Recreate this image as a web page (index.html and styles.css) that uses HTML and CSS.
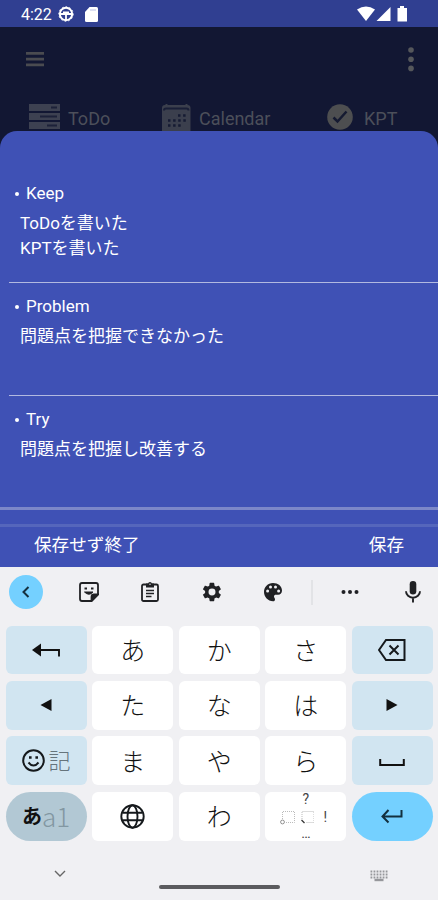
FILE: index.html
```html
<!DOCTYPE html>
<html lang="ja">
<head>
  <meta charset="UTF-8">
  <title>KPT</title>
  <link rel="stylesheet" href="styles.css">
</head>
<body>

  <div class="status">
    <span class="time">4:22</span>
    <svg class="status-wheel" width="16" height="16" viewBox="0 0 16 16" fill="none" stroke="#fff"><circle cx="8" cy="8" r="6.2" stroke-width="2"/><circle cx="8" cy="8" r="7.2" stroke-dasharray="1.6 2.1"/><path d="M2 8h12M8 8v6M5 6.5h6" stroke-width="1.8"/></svg>
    <svg class="status-card" width="13" height="15" viewBox="0 0 13 15"><path d="M4.500 0H11.500a1.500 1.500 0 0 1 1.500 1.500v12a1.500 1.500 0 0 1-1.500 1.500H1.500A1.500 1.500 0 0 1 0 13.500V5z" fill="#fff"/><path d="M5 3h6" stroke="#b9bfe4"/></svg>
    <svg class="status-right" width="52" height="16" viewBox="0 0 52 16" fill="#fff"><path d="M0 3.500Q9 -2.500 18 3.500L9 15z"/><path d="M33.500 1v14H19.500z"/><path d="M43 0h4v2h3v13.500h-9.500V2H43z"/></svg>
  </div>

  <div class="header">
    <div class="toolbar">
      <svg width="18" height="15" viewBox="0 0 18 15" fill="#4a4b50"><path d="M0 0h18v2.700H0zM0 5.800h18v2.700H0zM0 11.600h18v2.700H0z"/></svg>
      <svg width="6" height="25" viewBox="0 0 6 25" fill="#55575b"><circle cx="3" cy="3" r="2.800"/><circle cx="3" cy="12.200" r="2.800"/><circle cx="3" cy="21.400" r="2.800"/></svg>
    </div>
    <div class="tabs">
      <div class="tab tab-todo">
        <svg width="32" height="26" viewBox="0 0 32 26"><path d="M1 1h31v7H1zM1 10h31v7H1zM1 19h31v7H1z" fill="#3d4151"/><path d="M23 4.500h6M12 13.500h17M19 22.500h10" stroke="#1c2139" stroke-width="2"/></svg>
        <span>ToDo</span>
      </div>
      <div class="tab tab-calendar">
        <svg width="29" height="28" viewBox="0 0 29 28"><rect y="2" width="28.500" height="30" rx="3" fill="#3b3f4d"/><path d="M2 7.500q0-2 2-2h20.500q2 0 2 2" fill="none" stroke="#191e37" stroke-width="2"/><path d="M4.500 1v3M24.500 1v3" stroke="#3b3f4d" stroke-width="2"/><path d="M16 12.500h8M6 17.500h18M6 22.500h13" stroke="#161b33" stroke-width="2.500" stroke-dasharray="2.500 2.600"/></svg>
        <span>Calendar</span>
      </div>
      <div class="tab tab-kpt">
        <svg width="26" height="27" viewBox="0 0 26 27"><circle cx="13" cy="14" r="12.800" fill="#4d4e50"/><path d="M6.500 14.500l4 4 9-10" fill="none" stroke="#151a31" stroke-width="2.500"/></svg>
        <span>KPT</span>
      </div>
    </div>
  </div>

  <div class="sheet">
    <div class="item">
      <h2>Keep</h2>
      <p>ToDoを書いた<br>KPTを書いた</p>
    </div>
    <div class="item">
      <h2>Problem</h2>
      <p>問題点を把握できなかった</p>
    </div>
    <div class="item">
      <h2>Try</h2>
      <p>問題点を把握し改善する</p>
    </div>
    <div class="actions">
      <span>保存せず終了</span>
      <span>保存</span>
    </div>
  </div>

  <div class="keyboard">
    <div class="tools">
      <div class="tool back"><svg width="34" height="34" viewBox="0 0 34 34"><path d="M19.500 12L14.500 17l5 5" fill="none" stroke="#15303f" stroke-width="2"/></svg></div>
      <div class="tool"><svg width="20" height="20" viewBox="0 0 20 20" fill="none" stroke="#202124" stroke-width="1.800"><path d="M3 1h14q2 0 2 2v9.500L12.500 19H3q-2 0-2-2V3q0-2 2-2z"/><path d="M19 12.500h-4q-2.500 0-2.500 2.500v4z" fill="#202124"/><path d="M5.500 10q4.500 4.500 8.500 0z" fill="#202124" stroke-width="1"/><path d="M5.500 6.500h2.500M12 6.500h2.500"/></svg></div>
      <div class="tool"><svg width="18" height="20" viewBox="0 0 18 20" fill="none" stroke="#202124" stroke-width="1.800"><rect x="1" y="2.500" width="16" height="16.500" rx="1.500"/><path d="M5 1.500h8v4H5z" fill="#202124" stroke="none"/><circle cx="9" cy="1.800" r="1.800" fill="#202124" stroke="none"/><path d="M5 8.500h8M5 11.500h8M5 14.500h5.500" stroke-width="1.500"/><circle cx="9" cy="2.200" r=".7" fill="#f0f0f3" stroke="none"/></svg></div>
      <div class="tool"><svg width="22" height="22" viewBox="0 0 24 24"><path fill="#202124" fill-rule="evenodd" d="M19.400 13a7.800 7.800 0 0 0 0-2l2.100-1.600a.5.5 0 0 0 .1-.7l-2-3.400a.5.5 0 0 0-.6-.2l-2.500 1a7.300 7.300 0 0 0-1.700-1L14.400 2.400a.5.5 0 0 0-.5-.4h-4a.5.5 0 0 0-.5.400L9 5.100a7.700 7.700 0 0 0-1.700 1l-2.500-1a.5.5 0 0 0-.6.200l-2 3.400a.5.5 0 0 0 .1.700L4.500 11a7.800 7.800 0 0 0 0 2l-2.200 1.600a.5.5 0 0 0-.1.700l2 3.400c.1.200.400.300.6.200l2.500-1c.5.400 1.100.700 1.700 1l.4 2.700c0 .200.200.400.5.400h4c.300 0 .5-.2.500-.4l.4-2.700c.6-.3 1.200-.6 1.700-1l2.500 1c.2.100.5 0 .6-.2l2-3.400a.5.5 0 0 0-.1-.7zM12 8.200a3.800 3.800 0 1 1 0 7.600 3.800 3.800 0 0 1 0-7.600z"/></svg></div>
      <div class="tool"><svg width="20" height="20" viewBox="0 0 20 20"><path fill="#202124" d="M10 1C4.800 1 1 5 1 10s4 9.200 9 9.200c1.500 0 2-1 2-1.800 0-1.500-1-1.700-1-3 0-1 .8-1.600 1.800-1.600H15c2.500 0 4-2 4-4.300C19 4 15 1 10 1z"/><g fill="#f0f0f3"><circle cx="4.600" cy="9" r="1.500"/><circle cx="7.500" cy="5" r="1.500"/><circle cx="12.500" cy="5" r="1.500"/><circle cx="15.600" cy="9" r="1.500"/></g></svg></div>
      <div class="split"></div>
      <div class="tool"><svg width="18" height="6" viewBox="0 0 18 6" fill="#202124"><circle cx="2.500" cy="3" r="2"/><circle cx="9" cy="3" r="2"/><circle cx="15.500" cy="3" r="2"/></svg></div>
      <div class="tool mic"><svg width="16" height="22" viewBox="0 0 16 22"><rect x="4.700" y="0" width="6.600" height="13.500" rx="3.300" fill="#202124"/><path d="M1 10.200a7 6.500 0 0 0 14 0M8 17v4.500" fill="none" stroke="#202124" stroke-width="1.900"/></svg></div>
    </div>

    <div class="keys">
      <div class="key side"><svg width="30" height="16" viewBox="0 0 30 16"><path d="M1 8l9-6.500v13z" fill="#111"/><path d="M9 8h19v6.500" fill="none" stroke="#111" stroke-width="1.900"/></svg></div>
      <div class="key kana">あ</div>
      <div class="key kana">か</div>
      <div class="key kana">さ</div>
      <div class="key side"><svg width="28" height="22" viewBox="0 0 28 22" fill="none" stroke="#15191c" stroke-width="2"><path d="M8 1h18.500v20H8L1 11zM11.500 6.500l9 9M20.500 6.500l-9 9"/></svg></div>

      <div class="key side"><svg width="12" height="14" viewBox="0 0 12 14"><path d="M.5 7L11.500 1v12z" fill="#111"/></svg></div>
      <div class="key kana">た</div>
      <div class="key kana">な</div>
      <div class="key kana">は</div>
      <div class="key side"><svg width="12" height="14" viewBox="0 0 12 14"><path d="M11.500 7L.5 1v12z" fill="#111"/></svg></div>

      <div class="key side emoji"><svg width="23" height="23" viewBox="0 0 23 23" fill="none" stroke="#15191c" stroke-width="2"><circle cx="11.500" cy="11.500" r="10.300"/><path d="M6.500 13.500q5 6 10 0"/><path d="M7 8.500h2.600M13.400 8.500H16" stroke-width="2.600"/></svg><span>記</span></div>
      <div class="key kana">ま</div>
      <div class="key kana">や</div>
      <div class="key kana">ら</div>
      <div class="key side"><svg class="space" width="26" height="8" viewBox="0 0 26 8"><path d="M1.200 0v6h23.600V0" fill="none" stroke="#111" stroke-width="2"/></svg></div>

      <div class="key side mode"><b>あ</b><span>a1</span></div>
      <div class="key"><svg width="25" height="25" viewBox="0 0 25 25" fill="none" stroke="#15191c" stroke-width="1.900"><circle cx="12.500" cy="12.500" r="11.200"/><ellipse cx="12.500" cy="12.500" rx="5" ry="11.200"/><path d="M2.200 8.700h20.600M2.200 16.300h20.600"/></svg></div>
      <div class="key kana">わ</div>
      <div class="key marks">
        <span>?</span>
        <div class="marks-row">
          <svg width="34" height="15" viewBox="0 0 34 15" fill="none" stroke="#bbb"><path d="M2.500 9V1.500h12v11H6M22 9V1.500h12v11h-8" stroke-dasharray="1 1"/><circle cx="2.500" cy="12" r="1.900" stroke="#777" stroke-width=".8"/><path d="M21.500 10l3 3" stroke="#333" stroke-width="1.300"/></svg>
          <span>!</span>
        </div>
        <span class="dots">…</span>
      </div>
      <div class="key enter"><svg width="22" height="15" viewBox="0 0 22 15" fill="none" stroke="#12303f" stroke-width="2"><path d="M7.500 1L1.500 7.500l6 6M1.500 7.500H20.500V1"/></svg></div>
    </div>

    <div class="nav">
      <svg width="12" height="8" viewBox="0 0 12 8"><path d="M1 1l5 5 5-5" fill="none" stroke="#666" stroke-width="1.400"/></svg>
      <div class="pill"></div>
      <svg width="18" height="12" viewBox="0 0 18 12" stroke="#96979b" fill="none"><path d="M.5 1.500h17M.5 4.500h17M.5 7.500h17" stroke-width="1.800" stroke-dasharray="1.800 1.240"/><path d="M4.500 10h9" stroke-width="2.400"/></svg>
    </div>
  </div>

</body>
</html>
```
FILE: styles.css
```css
body {
  margin: 0;
  width: 438px;
  height: 900px;
  overflow: hidden;
  font-family: Roboto, "Noto Sans CJK JP", sans-serif;
  background: #121733;
}
svg {
  display: block;
  flex: none;
}
.status {
  display: flex;
  align-items: center;
  height: 27px;
  padding: 1px 29px 0 21px;
  box-sizing: border-box;
  background: #303f91;
  color: #fff;
}
.time {
  width: 37px;
  font-size: 16px;
}
.status-card {
  margin-left: 11px;
}
.status-right {
  margin-left: auto;
}

.header {
  height: 119px;
  overflow: hidden;
  color: #4c4f5a;
}
.toolbar {
  display: flex;
  justify-content: space-between;
  align-items: center;
  height: 64px;
  padding: 0 24px 0 26px;
}
.tabs {
  display: flex;
  padding: 12px 0 0 28px;
}
.tab {
  display: flex;
  align-items: flex-start;
  height: 32px;
  font-size: 18px;
  line-height: 31px;
}
.tab-todo {
  width: 134px;
  gap: 8px;
}
.tab-calendar {
  width: 165px;
  gap: 8px;
}
.tab-kpt {
  gap: 11px;
}

.sheet {
  position: relative;
  height: 436px;
  margin-top: -15px;
  padding-top: 39px;
  box-sizing: border-box;
  border-radius: 17px 17px 0 0;
  background: #3f51b5;
  color: #fff;
}
.item {
  height: 113px;
  margin-left: 9px;
  padding: 11px 0 0 4px;
  box-sizing: border-box;
  border-bottom: 1px solid #b2b9e0;
}
.item h2 {
  display: flex;
  align-items: center;
  margin: 0;
  font-size: 17px;
  font-weight: 400;
  line-height: 25px;
}
.item h2::before {
  content: "";
  width: 4px;
  height: 4px;
  margin: 0 7px 0 2px;
  border-radius: 50%;
  background: #fff;
}
.item p {
  margin: 5px 0 0 7px;
  font-size: 17px;
  line-height: 25px;
}
.item:nth-child(3) {
  border: 0;
}
.actions {
  display: flex;
  justify-content: space-between;
  align-items: center;
  height: 60px;
  margin-top: -2px;
  padding: 9px 34px 0 34px;
  box-sizing: border-box;
  border-top: 3px solid #7c87c8;
  background: linear-gradient(#5566bc, #5566bc) 0 14px / 100% 3px no-repeat;
  font-size: 17.6px;
}

.keyboard {
  height: 333px;
  background: #f0f0f3;
}
.tools {
  display: flex;
  align-items: center;
  height: 50px;
  padding-left: 9px;
}
.tool {
  display: flex;
  justify-content: center;
  width: 20px;
  margin-left: 41.500px;
}
.back {
  width: 34px;
  margin: 0 -6px 0 0;
  border-radius: 50%;
  background: #74d0ff;
}
.split {
  width: 2px;
  height: 25px;
  margin: 0 -15px 0 28px;
  background: #e2e3e6;
}
.mic {
  margin-left: 43px;
}
.keys {
  display: grid;
  grid-template-columns: repeat(5, 81.200px);
  grid-auto-rows: 48.600px;
  gap: 6.900px 5.400px;
  padding: 8.500px 5.500px 0;
}
.key {
  display: flex;
  justify-content: center;
  align-items: center;
  border-radius: 6px;
  background: #fff;
  color: #111;
  font-size: 24px;
  line-height: 34px;
}
.kana {
  padding-top: 4px;
  box-sizing: border-box;
  font-weight: 300;
  font-size: 25px;
}
.side {
  background: #d1e5f1;
}
.emoji {
  gap: 4px;
}
.emoji span {
  padding-top: 3px;
  color: #66747c;
  font-size: 22px;
  font-weight: 300;
}
.space {
  margin-top: 4px;
}
.mode {
  border-radius: 25px;
  background: #b2c8d4;
  font-size: 20px;
}
.mode b {
  padding-top: 2px;
}
.mode span {
  color: #8297a2;
  font-family: "Noto Sans CJK JP", sans-serif;
  font-size: 26px;
  font-weight: 300;
}
.marks {
  flex-direction: column;
  justify-content: space-between;
  font-size: 14px;
  line-height: 15px;
  color: #444;
}
.marks-row {
  display: flex;
  gap: 10px;
  margin-left: -5px;
}
.dots {
  margin-top: -3px;
}
.enter {
  border-radius: 25px;
  background: #74d0ff;
}
.nav {
  display: flex;
  justify-content: space-between;
  align-items: flex-start;
  padding: 29px 50px 0 54px;
}
.pill {
  width: 121px;
  height: 4px;
  margin: 15px 0 0 2px;
  border-radius: 2px;
  background: #5b5b5e;
}
```
